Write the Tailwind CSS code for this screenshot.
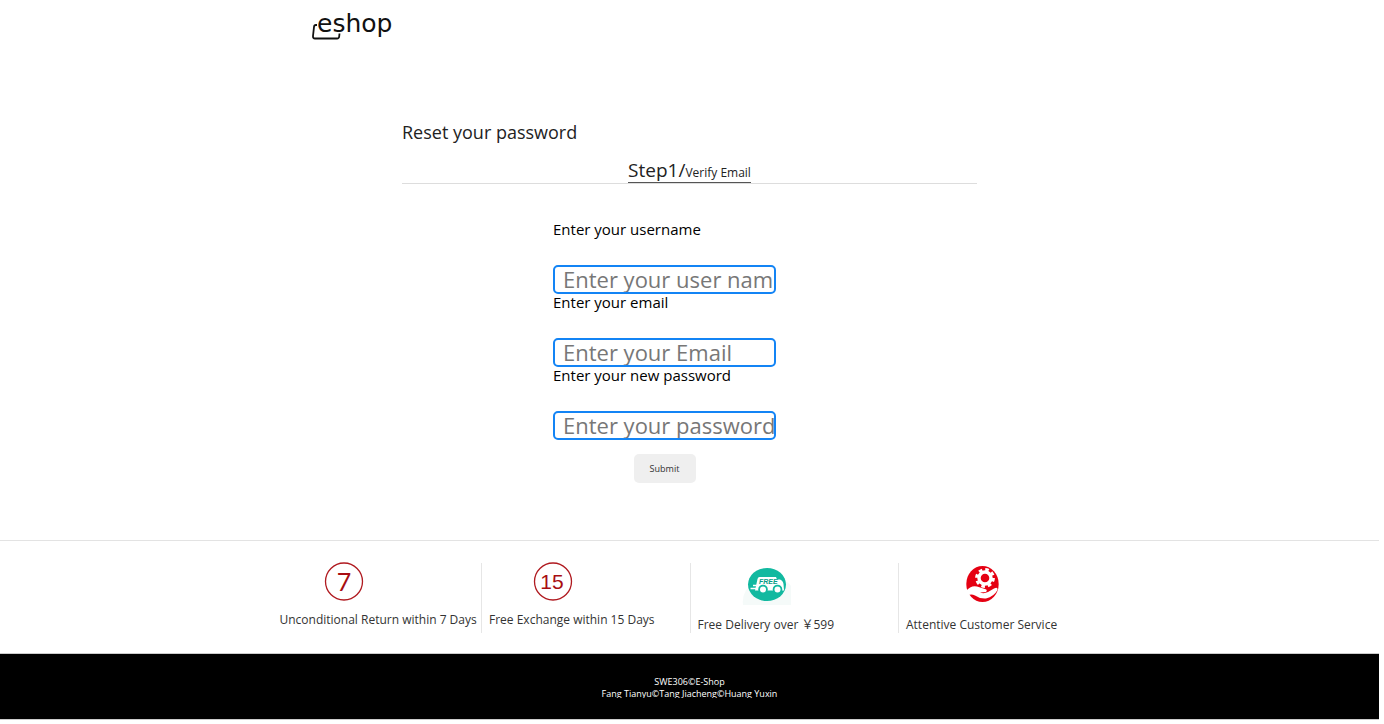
<!DOCTYPE html>
<html lang="en">
<head>
<meta charset="utf-8">
<title>E-Shop - Reset your password</title>
<script src="https://cdn.jsdelivr.net/npm/@tailwindcss/browser@4"></script>
</head>
<body class="bg-white pr-[5px] font-['Open_Sans','Noto_Sans_CJK_SC',sans-serif] text-[#222]">
<header class="mx-auto flex h-14 max-w-[834px] items-start px-[37px] pt-[11px]">
  <a href="#" aria-label="eshop home">
    <svg class="h-[34px] w-[96px] overflow-visible" viewBox="0 0 96 34" fill="none">
      <path d="M7 14H5.800Q4.200 14 4 16L3 25Q2.800 27.500 5 27.500H27Q29 27.500 29.200 25.500L29.500 22.500" stroke="#111" stroke-width="1.800"/>
      <text x="7" y="21" fill="#111" font-family="DejaVu Sans" font-size="25">eshop</text>
    </svg>
  </a>
</header>
<main class="mx-auto max-w-[575px] pt-16">
  <h1 class="text-[18px] leading-6">Reset your password</h1>
  <div class="mt-3 flex justify-center border-b border-[#ddd]">
    <h2 class="flex h-[27px] items-baseline border-b border-[#555] leading-7"><span class="text-[19px]">Step1/</span><span class="text-[12px]">Verify Email</span></h2>
  </div>
  <form class="ml-[151px] mt-[35px] flex w-[223px] flex-col text-[15px] leading-5 text-black">
    <label for="user">Enter your username</label>
    <input id="user" type="text" placeholder="Enter your user name" class="mb-[-2px] mt-[26px] h-[29px] rounded-[5px] border-2 border-[#1384f5] pb-[2px] pl-2 text-[22px] leading-6 placeholder:text-[#777]">
    <label for="email">Enter your email</label>
    <input id="email" type="email" placeholder="Enter your Email" class="mb-[-2px] mt-[26px] h-[29px] rounded-[5px] border-2 border-[#1384f5] pb-[2px] pl-2 text-[22px] leading-6 placeholder:text-[#777]">
    <label for="pass">Enter your new password</label>
    <input id="pass" type="password" placeholder="Enter your password" class="mt-[26px] h-[29px] rounded-[5px] border-2 border-[#1384f5] pb-[2px] pl-2 text-[22px] leading-6 placeholder:text-[#777]">
    <button type="submit" class="mt-[14px] h-[29px] w-[62px] self-center rounded-[5px] bg-[#efefef] text-[9px] text-[#333]">Submit</button>
  </form>
</main>
<footer class="mt-[57px] border-t border-[#e3e3e3]">
  <ul class="mx-auto grid max-w-[834px] grid-cols-4 whitespace-nowrap pb-5 pt-[22px] text-[12px] leading-5 text-[#333]">
    <li class="h-[70px] pl-[7px]">
      <svg class="ml-11 size-10 overflow-visible" viewBox="0 0 40 40"><circle cx="20" cy="18.500" r="18.500" fill="none" stroke="#b01a20" stroke-width="1.300"/><text x="20" y="28" text-anchor="middle" font-family="Lato" font-size="25" fill="#a80d12">7</text></svg>
      <p class="mt-[7px]">Unconditional Return within 7 Days</p>
    </li>
    <li class="h-[70px] border-l border-[#e6e6e6] pl-[7px]">
      <svg class="ml-11 size-10 overflow-visible" viewBox="0 0 40 40"><circle cx="20" cy="18.500" r="18.500" fill="none" stroke="#b01a20" stroke-width="1.300"/><text x="19" y="26" text-anchor="middle" font-family="Liberation Sans" font-size="21" fill="#a80d12">15</text></svg>
      <p class="mt-[7px]">Free Exchange within 15 Days</p>
    </li>
    <li class="h-[70px] border-l border-[#e6e6e6] pl-[7px]">
      <svg class="ml-11 h-[45px] w-[50px]" viewBox="0 0 50 45">
        <path d="M4 27Q0 34 1 42H49V23Q46 18 40 18L10 22Z" fill="#f5faf9"/>
        <ellipse cx="25" cy="21.500" rx="19" ry="16.500" fill="#12b9a0"/>
        <path d="M16 22.500H11M15 25.500H8.500" stroke="#fff" stroke-width="1.500"/>
        <path d="M17.500 14H34L35 16.500H38Q41 17.500 41.500 21L42 27.500H13L15.500 16Q16 14 17.500 14Z" fill="#fff"/>
        <circle cx="21" cy="26.500" r="4.800" fill="#12b9a0"/><circle cx="21" cy="26.500" r="3" fill="#fff"/>
        <circle cx="35.500" cy="26.500" r="4.800" fill="#12b9a0"/><circle cx="35.500" cy="26.500" r="3" fill="#fff"/>
        <text x="17" y="20.500" font-family="Liberation Sans" font-size="7" font-weight="bold" font-style="italic" fill="#079d87">FREE</text>
      </svg>
      <p class="mt-[7px]">Free Delivery over ￥599</p>
    </li>
    <li class="h-[70px] border-l border-[#e6e6e6] pl-[7px]">
      <svg class="ml-[57px] h-[45px] w-10" viewBox="0 0 40 45">
        <ellipse cx="19.500" cy="21" rx="16.200" ry="18" fill="#e50012"/>
        <circle cx="22" cy="15" r="6" fill="none" stroke="#fff" stroke-width="3.400"/>
        <circle cx="22" cy="15" r="8.500" fill="none" stroke="#fff" stroke-width="2.800" stroke-dasharray="3.600 3.075"/>
        <path d="M3 28Q8 22 14 23.500L22 26Q25 27 23 29L17 29.500Q21 31 25 29L31 25.500Q35 23.500 34.500 27Q31 33.500 23 35.500Q17 36 12 32.500Q8 30.500 5 32.500L3.500 31Z" fill="#fff"/>
      </svg>
      <p class="mt-[7px]">Attentive Customer Service</p>
    </li>
  </ul>
  <div class="border-y border-[#ccc] bg-black pb-[21px] pt-[22px] text-center text-[9px] leading-3 text-white">
    <p>SWE306©E-Shop</p>
    <p class="h-[10px] overflow-hidden">Fang Tianyu©Tang Jiacheng©Huang Yuxin</p>
  </div>
</footer>
</body>
</html>
